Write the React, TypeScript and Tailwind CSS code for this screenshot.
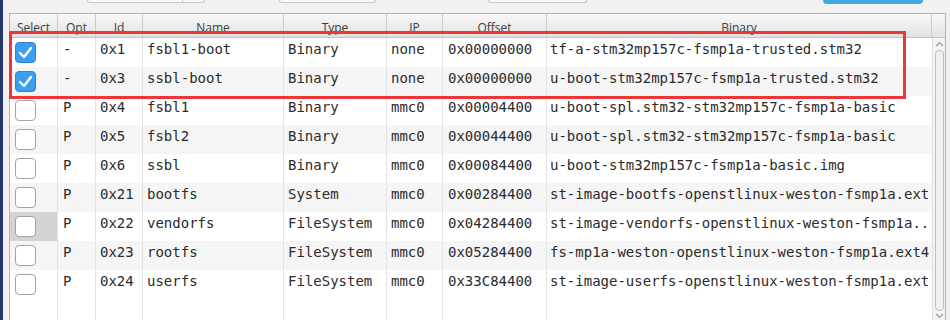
import React from 'react'

type Row = { sel: boolean; opt: string; id: string; name: string; type: string; ip: string; offset: string; bin: string }

const ROWS: Row[] = [
  { sel: true, opt: '-', id: '0x1', name: 'fsbl1-boot', type: 'Binary', ip: 'none', offset: '0x00000000', bin: 'tf-a-stm32mp157c-fsmp1a-trusted.stm32' },
  { sel: true, opt: '-', id: '0x3', name: 'ssbl-boot', type: 'Binary', ip: 'none', offset: '0x00000000', bin: 'u-boot-stm32mp157c-fsmp1a-trusted.stm32' },
  { sel: false, opt: 'P', id: '0x4', name: 'fsbl1', type: 'Binary', ip: 'mmc0', offset: '0x00004400', bin: 'u-boot-spl.stm32-stm32mp157c-fsmp1a-basic' },
  { sel: false, opt: 'P', id: '0x5', name: 'fsbl2', type: 'Binary', ip: 'mmc0', offset: '0x00044400', bin: 'u-boot-spl.stm32-stm32mp157c-fsmp1a-basic' },
  { sel: false, opt: 'P', id: '0x6', name: 'ssbl', type: 'Binary', ip: 'mmc0', offset: '0x00084400', bin: 'u-boot-stm32mp157c-fsmp1a-basic.img' },
  { sel: false, opt: 'P', id: '0x21', name: 'bootfs', type: 'System', ip: 'mmc0', offset: '0x00284400', bin: 'st-image-bootfs-openstlinux-weston-fsmp1a.ext' },
  { sel: false, opt: 'P', id: '0x22', name: 'vendorfs', type: 'FileSystem', ip: 'mmc0', offset: '0x04284400', bin: 'st-image-vendorfs-openstlinux-weston-fsmp1a..' },
  { sel: false, opt: 'P', id: '0x23', name: 'rootfs', type: 'FileSystem', ip: 'mmc0', offset: '0x05284400', bin: 'fs-mp1a-weston-openstlinux-weston-fsmp1a.ext4' },
  { sel: false, opt: 'P', id: '0x24', name: 'userfs', type: 'FileSystem', ip: 'mmc0', offset: '0x33C84400', bin: 'st-image-userfs-openstlinux-weston-fsmp1a.ext' },
]

const HEADERS = ['Select', 'Opt', 'Id', 'Name', 'Type', 'IP', 'Offset', 'Binary']
const GRID = 'grid grid-cols-[48px_38px_47px_141px_103px_56px_104px_385px]'

function Check({ on }: { on: boolean }) {
  if (on) {
    return (
      <div className="w-[21px] h-[21px] rounded-[4px] bg-[#3a9ff0] border border-[#2f86cf] flex items-center justify-center">
        <svg width="15" height="13" viewBox="0 0 15 13">
          <path d="M2 7 L6 11 L13 2" fill="none" stroke="#fff" strokeWidth="2.4" strokeLinecap="round" strokeLinejoin="round" />
        </svg>
      </div>
    )
  }
  return <div className="w-[21px] h-[21px] rounded-[4px] bg-white border border-[#a3a3a3]" />
}

export default function App() {
  return (
    <div className="w-[950px] h-[320px] flex bg-[#f1f1f1] overflow-hidden relative" style={{ fontFamily: '"DejaVu Sans Mono", monospace' }}>
      <div className="w-[3px] bg-[#28376a]" />
      <div className="flex-1 flex flex-col">
        {/* cut-off toolbar above */}
        <div className="h-[13px] flex items-start">
          <div className="ml-[84px] w-[118px] h-[3px] flex bg-[#fafafa] border-b border-x border-[#c9c9c9] rounded-b-[3px]">
            <div className="w-[95px] border-r border-[#c9c9c9]" />
          </div>
          <div className="ml-[74px] w-[97px] h-[3px] bg-[#fafafa] border-b border-x border-[#c9c9c9] rounded-b-[3px]" />
          <div className="ml-[112px] w-[99px] h-[3px] bg-[#fafafa] border-b border-x border-[#c9c9c9] rounded-b-[3px]" />
          <div className="ml-[236px] w-[100px] h-[4px] bg-[#3ea8df] rounded-b-[4px]" />
        </div>
        <div className="flex-1 flex ml-[6px] mr-[4px] border-t border-l border-r border-[#b3b3b3] bg-white">
          <div className="flex flex-col">
            <div className={`${GRID} h-[24px] bg-gradient-to-b from-[#f8f8f8] to-[#e2e2e2] border-b border-[#c4c4c4]`} style={{ fontFamily: '"Open Sans", sans-serif' }}>
              {HEADERS.map((h) => (
                <div key={h} className="border-r border-[#cbcbcb] flex items-center justify-center text-[12px] text-[#3c3c3c] pt-[4px]">
                  {h}
                </div>
              ))}
            </div>
            {ROWS.map((r, i) => (
              <div key={r.id} className={`${GRID} h-[29px] text-[14px] text-[#2b2b2b] ${i % 2 === 0 ? 'bg-white' : 'bg-[#f5f5f5]'}`}>
                <div className={`border-r border-[#e3e3e3] flex items-center pl-[5px] ${i === 6 ? 'bg-[#d4d4d4]' : ''}`}>
                  <Check on={r.sel} />
                </div>
                <div className="border-r border-[#e3e3e3] flex items-center pl-[5px] pb-[6px]">{r.opt}</div>
                <div className="border-r border-[#e3e3e3] flex items-center pl-[4px] pb-[6px]">{r.id}</div>
                <div className="border-r border-[#e3e3e3] flex items-center pl-[4px] pb-[6px]">{r.name}</div>
                <div className="border-r border-[#e3e3e3] flex items-center pl-[4px] pb-[6px]">{r.type}</div>
                <div className="border-r border-[#e3e3e3] flex items-center pl-[4px] pb-[6px]">{r.ip}</div>
                <div className="border-r border-[#e3e3e3] flex items-center pl-[5px] pb-[6px]">{r.offset}</div>
                <div className="flex items-center pl-[3px] pb-[6px] overflow-hidden whitespace-nowrap">{r.bin}</div>
              </div>
            ))}
            <div className={`${GRID} flex-1`}>
              {HEADERS.map((h) => (
                <div key={h} className="border-r border-[#e3e3e3] last:border-r-0" />
              ))}
            </div>
          </div>
          <div className="flex-1 flex flex-col">
            <div className="h-[24px] bg-gradient-to-b from-[#f8f8f8] to-[#e2e2e2] border-b border-[#c4c4c4]" />
            <div className="flex-1 flex flex-col items-center bg-[#f4f4f4] border-l border-[#e0e0e0]">
              <svg width="9" height="6" viewBox="0 0 9 6" className="mt-[3px]">
                <path d="M1 5 L4.5 1.5 L8 5" fill="none" stroke="#9a9a9a" strokeWidth="1.2" />
              </svg>
              <div className="mt-[3px] w-[9px] flex-1 rounded-[4px] border border-[#bdbdbd] bg-[#f0f0f0]" />
              <svg width="9" height="6" viewBox="0 0 9 6" className="mt-[2px] mb-[1px]">
                <path d="M1 1 L4.5 4.5 L8 1" fill="none" stroke="#9a9a9a" strokeWidth="1.2" />
              </svg>
            </div>
          </div>
        </div>
      </div>
      {/* red highlight annotation */}
      <div className="absolute left-[9px] top-[31px] w-[897px] h-[68px] border-[3px] border-[#ef3636] pointer-events-none" />
    </div>
  )
}
